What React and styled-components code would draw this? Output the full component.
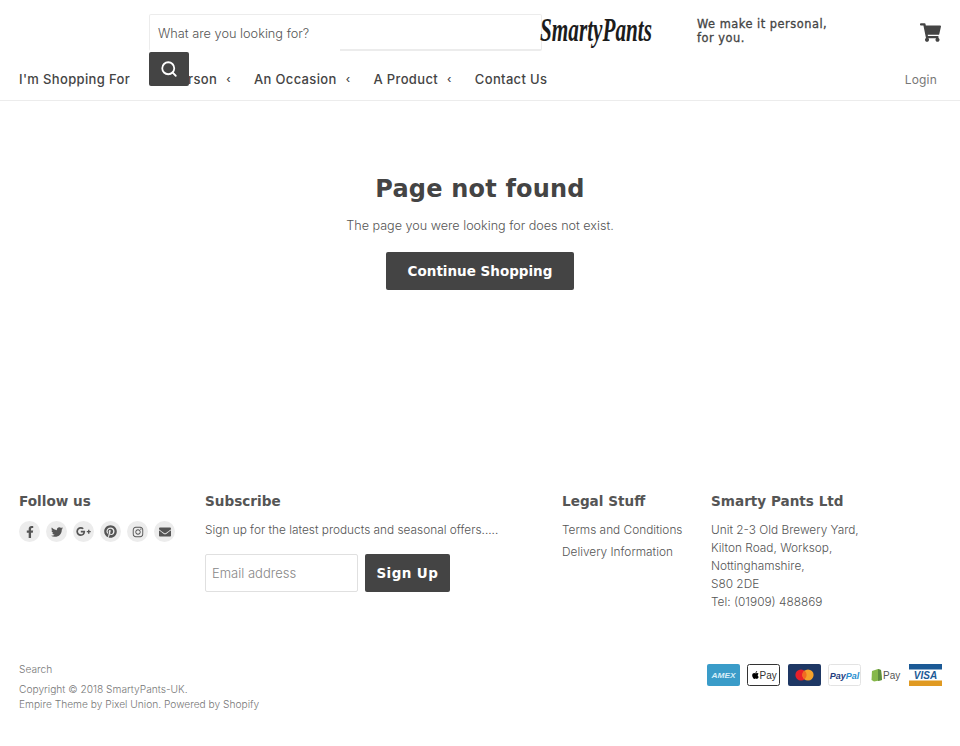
import React from "react";
import styled, { createGlobalStyle } from "styled-components";
import { FaFacebookF, FaTwitter, FaGooglePlusG, FaPinterest, FaInstagram, FaEnvelope, FaShoppingCart, FaApple } from "react-icons/fa";
import { FiSearch } from "react-icons/fi";

const GlobalStyle = createGlobalStyle`
  html, body {
    margin: 0;
    background: #fff;
    color: #444;
    font-family: "Inter", "Liberation Sans", sans-serif;
    font-weight: 300;
    font-size: 12.6px;
  }
  * { box-sizing: border-box; }
`;

const heading = `"DejaVu Sans", sans-serif`;

const Header = styled.header`
  position: relative;
  height: 101px;
  border-bottom: 1px solid #ececec;
  padding: 14px 19px 0;
`;

const TopRow = styled.div`
  display: flex;
  align-items: flex-start;
  height: 36px;
  padding-left: 130px;
`;

const SearchBox = styled.div`
  width: 393px;
  height: 37px;
  flex: none;
  border: 1px solid #ececec;
  border-bottom-width: 2px;
  border-radius: 2px;
  padding: 2px 8px 0;
  display: flex;
  align-items: center;
  font-size: 12.75px;
  color: #555;
`;

const SearchMask = styled.div`
  position: absolute;
  left: 150px;
  top: 49px;
  width: 190px;
  height: 3px;
  background: #fff;
`;

const SearchButton = styled.button`
  position: absolute;
  left: 149px;
  top: 52px;
  width: 40px;
  height: 34px;
  border: 0;
  padding: 0;
  border-radius: 2px;
  background: #444;
  color: #fff;
  display: flex;
  align-items: center;
  justify-content: center;
`;

const LogoMark = styled.svg`
  width: 114px;
  height: 40px;
  flex: none;
  margin-left: -2px;
  margin-top: -2px;
  display: block;
  overflow: visible;
`;

const Tagline = styled.div`
  margin-left: 43px;
  margin-top: 3px;
  font-family: ${heading};
  font-size: 11.4px;
  font-weight: 400;
  line-height: 14px;
  letter-spacing: 0.5px;
  -webkit-text-stroke: 0.3px #444;
  color: #444;
`;

const CartLink = styled.a`
  margin-left: auto;
  margin-top: 8px;
  color: #444;
  display: flex;
`;

const Nav = styled.nav`
  display: flex;
  align-items: center;
  height: 30px;
  margin-top: 14px;
  font-size: 13px;
  font-weight: 500;
  letter-spacing: 0.35px;
  color: #444;
`;

const NavItem = styled.a`
  display: flex;
  align-items: center;
  margin-right: ${(p) => (p.$wide ? 28 : 23)}px;
  white-space: nowrap;
`;

const Caret = styled.span`
  margin-left: 9px;
  font-size: 11px;
`;

const Login = styled.a`
  margin-left: auto;
  margin-right: 4px;
  font-size: 12px;
  letter-spacing: 0.2px;
  color: #777;
  font-weight: 400;
`;

const Main = styled.main`
  height: 391px;
  padding-top: 72px;
  display: flex;
  flex-direction: column;
  align-items: center;
`;

const Title = styled.h1`
  margin: 0;
  font-family: ${heading};
  font-size: 24px;
  line-height: 32px;
  font-weight: 700;
  letter-spacing: 0.2px;
  color: #444;
`;

const Message = styled.p`
  margin: 11px 0 0;
  line-height: 20px;
  color: #555;
`;

const DarkButton = styled.button`
  border: 0;
  border-radius: 2px;
  background: #444;
  color: #fff;
  font-family: ${heading};
  font-weight: 700;
  height: 38px;
  padding: 0 ${(p) => p.$pad}px;
  font-size: 13.5px;
  letter-spacing: ${(p) => p.$spacing}px;
`;

const ContinueWrap = styled.div`
  margin-top: 16px;
`;

const Footer = styled.footer`
  padding: 0 19px;
`;

const Columns = styled.div`
  display: flex;
  align-items: flex-start;
`;

const Column = styled.section`
  width: ${(p) => p.$width}px;
  flex: none;
`;

const ColHeading = styled.h4`
  margin: 0 0 11px;
  font-family: ${heading};
  font-size: 13.6px;
  line-height: 18px;
  font-weight: 700;
  color: #555;
`;

const SocialRow = styled.div`
  display: flex;
  gap: 6px;
`;

const SocialIcon = styled.a`
  width: 21px;
  height: 21px;
  border-radius: 50%;
  background: #ececec;
  color: #555;
  display: flex;
  align-items: center;
  justify-content: center;
  font-size: 12px;
`;

const BodyText = styled.p`
  margin: 0;
  color: #555;
  font-size: 11.85px;
  line-height: 18px;
`;

const SubscribeForm = styled.div`
  display: flex;
  gap: 7px;
  margin-top: 15px;
`;

const EmailInput = styled.div`
  width: 153px;
  height: 38px;
  border: 1px solid #e0e0e0;
  border-radius: 2px;
  padding: 0 6px;
  display: flex;
  align-items: center;
  color: #888;
  font-size: 13px;
`;

const LinkList = styled.div`
  display: flex;
  flex-direction: column;
  gap: 4px;
`;

const Bottom = styled.div`
  display: flex;
  justify-content: space-between;
  align-items: flex-start;
  margin-top: 51px;
`;

const Small = styled.div`
  font-size: 10.2px;
  line-height: 15px;
  color: #777;
`;

const SearchLink = styled(Small)`
  margin-bottom: 5px;
`;

const Payments = styled.div`
  display: flex;
  gap: 7.4px;
  margin: 2px -1px 0 0;
`;

const Card = styled.svg`
  width: 33px;
  height: 22px;
  display: block;
`;

const cardText = { fontFamily: "Liberation Sans, sans-serif", fontWeight: 700, fontStyle: "italic" };

const Amex = () => (
  <Card viewBox="0 0 33 22">
    <rect width="33" height="22" rx="2" fill="#3a9cc9" />
    <text x="16.5" y="14" textAnchor="middle" fontSize="7.5" textLength="24" lengthAdjust="spacingAndGlyphs" fill="#d9eef8" style={cardText}>AMEX</text>
  </Card>
);

const ApplePay = () => (
  <Card viewBox="0 0 33 22">
    <rect x=".5" y=".5" width="32" height="21" rx="2" fill="#fff" stroke="#333" />
    <FaApple x="4" y="6.500" size="9" color="#000" />
    <text x="12.500" y="15" fontSize="10" fill="#333" fontFamily="Liberation Sans, sans-serif">Pay</text>
  </Card>
);

const MasterCard = () => (
  <Card viewBox="0 0 33 22">
    <rect width="33" height="22" rx="2" fill="#1e3764" />
    <circle cx="13" cy="11" r="5.6" fill="#e8202a" />
    <circle cx="20" cy="11" r="5.6" fill="#f4a12b" />
    <path d="M16.5 6.6a5.6 5.6 0 0 1 0 8.8 5.6 5.6 0 0 1 0-8.8z" fill="#f26a22" />
  </Card>
);

const PayPal = () => (
  <Card viewBox="0 0 33 22">
    <rect x=".5" y=".5" width="32" height="21" rx="2" fill="#fff" stroke="#e3e3e3" />
    <text x="16.5" y="14.500" textAnchor="middle" fontSize="9" style={cardText}>
      <tspan fill="#1f3f7f">Pay</tspan>
      <tspan fill="#2a8fd0">Pal</tspan>
    </text>
  </Card>
);

const ShopPay = () => (
  <Card viewBox="0 0 33 22">
    <path d="M3 7l6-2 3 1 1 10-8 1.500-2.500-1.500z" fill="#86b84a" />
    <path d="M9 5l3 1 1 10-4 1z" fill="#5e8e3e" />
    <text x="14" y="15" fontSize="10" fill="#555" fontFamily="Liberation Sans, sans-serif">Pay</text>
  </Card>
);

const Visa = () => (
  <Card viewBox="0 0 33 22">
    <rect width="33" height="22" rx="1" fill="#fff" />
    <rect width="33" height="5.500" fill="#1b5a96" />
    <rect y="16.500" width="33" height="5.500" fill="#e09a22" />
    <text x="16.500" y="14.500" textAnchor="middle" fontSize="10" fill="#1b5a96" style={cardText}>VISA</text>
  </Card>
);

const navItems = [
  { label: "I'm Shopping For" },
  { label: "A Person", caret: true },
  { label: "An Occasion", caret: true },
  { label: "A Product", caret: true },
  { label: "Contact Us" },
];

export default function App() {
  return (
    <>
      <GlobalStyle />
      <Header>
        <TopRow>
          <SearchBox>What are you looking for?</SearchBox>
          <LogoMark viewBox="0 0 114 40">
            <text
              x="0"
              y="29"
              textLength="112"
              lengthAdjust="spacingAndGlyphs"
              fontFamily="Liberation Serif, serif"
              fontStyle="italic"
              fontWeight="700"
              fontSize="33"
              fill="#1c1c1c"
            >
              SmartyPants
            </text>
          </LogoMark>
          <Tagline>
            We make it personal,
            <br />
            for you.
          </Tagline>
          <CartLink>
            <FaShoppingCart size={21} />
          </CartLink>
        </TopRow>
        <Nav>
          {navItems.map((item, i) => (
            <NavItem key={item.label} $wide={i === 0}>
              {item.label}
              {item.caret && <Caret>‹</Caret>}
            </NavItem>
          ))}
          <Login>Login</Login>
        </Nav>
        <SearchMask />
        <SearchButton>
          <FiSearch size={18} strokeWidth={2.4} />
        </SearchButton>
      </Header>
      <Main>
        <Title>Page not found</Title>
        <Message>The page you were looking for does not exist.</Message>
        <ContinueWrap>
          <DarkButton $pad={22} $spacing={0}>Continue Shopping</DarkButton>
        </ContinueWrap>
      </Main>
      <Footer>
        <Columns>
          <Column $width={186}>
            <ColHeading>Follow us</ColHeading>
            <SocialRow>
              <SocialIcon><FaFacebookF /></SocialIcon>
              <SocialIcon><FaTwitter /></SocialIcon>
              <SocialIcon><FaGooglePlusG size={15} /></SocialIcon>
              <SocialIcon><FaPinterest size={13} /></SocialIcon>
              <SocialIcon><FaInstagram size={12} /></SocialIcon>
              <SocialIcon><FaEnvelope /></SocialIcon>
            </SocialRow>
          </Column>
          <Column $width={357}>
            <ColHeading>Subscribe</ColHeading>
            <BodyText>Sign up for the latest products and seasonal offers.....</BodyText>
            <SubscribeForm>
              <EmailInput>Email address</EmailInput>
              <DarkButton $pad={11.5} $spacing={0.4}>Sign Up</DarkButton>
            </SubscribeForm>
          </Column>
          <Column $width={149}>
            <ColHeading>Legal Stuff</ColHeading>
            <LinkList>
              <BodyText>Terms and Conditions</BodyText>
              <BodyText>Delivery Information</BodyText>
            </LinkList>
          </Column>
          <Column $width={230}>
            <ColHeading>Smarty Pants Ltd</ColHeading>
            <BodyText>
              Unit 2-3 Old Brewery Yard,
              <br />
              Kilton Road, Worksop,
              <br />
              Nottinghamshire,
              <br />
              S80 2DE
              <br />
              Tel: (01909) 488869
            </BodyText>
          </Column>
        </Columns>
        <Bottom>
          <div>
            <SearchLink>Search</SearchLink>
            <Small>
              Copyright © 2018 SmartyPants-UK.
              <br />
              Empire Theme by Pixel Union. Powered by Shopify
            </Small>
          </div>
          <Payments>
            <Amex />
            <ApplePay />
            <MasterCard />
            <PayPal />
            <ShopPay />
            <Visa />
          </Payments>
        </Bottom>
      </Footer>
    </>
  );
}
